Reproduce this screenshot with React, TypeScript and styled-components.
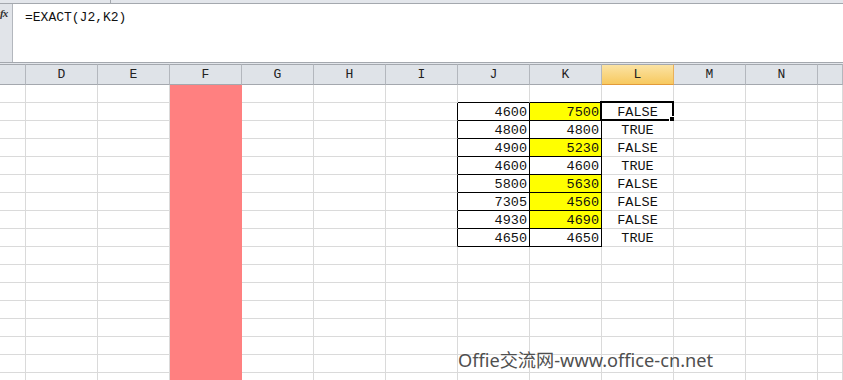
import React from 'react';
import styled, { createGlobalStyle, css } from 'styled-components';

const GlobalStyle = createGlobalStyle`
	html, body {
		margin: 0;
		padding: 0;
		background: #ffffff;
	}
`;

const CELL_FONT = `"Liberation Mono", "DejaVu Sans Mono", monospace`;

const Window = styled.div`
	position: relative;
	width: 843px;
	height: 380px;
	overflow: hidden;
	background: #ffffff;
`;

const TopStrip = styled.div`
	box-sizing: border-box;
	height: 4px;
	background: #e3e6eb;
	border-bottom: 1px solid #a4a8ae;
	display: flex;
`;

const TopDivider = styled.div`
	width: 110px;
	border-right: 1px solid #a4a8ae;
`;

const FormulaBar = styled.div`
	box-sizing: border-box;
	display: flex;
	height: 59px;
	border-bottom: 1px solid #a4a8ae;
`;

const FxBox = styled.div`
	box-sizing: border-box;
	width: 13px;
	background: #e1e4e9;
	border-right: 1px solid #b3b7bd;
	font-family: "Liberation Serif", serif;
	font-style: italic;
	font-weight: bold;
	font-size: 11px;
	color: #333;
	padding: 3px 0 0 0;
	letter-spacing: -1px;
`;

const FormulaText = styled.div`
	flex: 1;
	padding: 6px 0 0 12px;
	font-family: ${CELL_FONT};
	font-size: 13px;
	color: #111;
`;

const Gap = styled.div`
	height: 1px;
	background: #e3e6eb;
`;

const Sheet = styled.div`
	display: grid;
	grid-template-columns: 26px repeat(11, 72px) 1fr;
`;

const Header = styled.div<{ $active?: boolean }>`
	box-sizing: border-box;
	height: 21px;
	border-top: 1px solid #a4a8ae;
	border-bottom: 1px solid #a4a8ae;
	border-right: 1px solid #b3b7bd;
	background: #dfe3e8;
	font-family: ${CELL_FONT};
	font-size: 13px;
	color: #222;
	text-align: center;
	line-height: 20px;
	${p =>
		p.$active &&
		css`
			background: linear-gradient(#fbe3a4, #f7c95f);
			border-bottom-color: #e29a3a;
			border-right-color: #e9b05a;
		`}
`;

const Cell = styled.div<{
	$fill?: string;
	$right?: string;
	$bottom?: string;
	$align?: 'left' | 'right' | 'center';
}>`
	position: relative;
	box-sizing: border-box;
	height: 18px;
	border-right: 1px solid ${p => p.$right || '#dadada'};
	border-bottom: 1px solid ${p => p.$bottom || '#dadada'};
	background: ${p => p.$fill || '#ffffff'};
	font-family: ${CELL_FONT};
	font-size: 13.5px;
	color: #111;
	line-height: 20px;
	text-align: ${p => p.$align || 'left'};
	padding: 0 2px;
	white-space: nowrap;
	overflow: visible;
`;

const Selection = styled.div`
	position: absolute;
	left: -2px;
	top: -2px;
	right: -1px;
	bottom: -1px;
	border: 2px solid #000;
	pointer-events: none;
`;

const FillHandle = styled.div`
	position: absolute;
	right: -4px;
	bottom: -4px;
	width: 5px;
	height: 5px;
	background: #000;
	border: 1px solid #fff;
`;

const Watermark = styled.div`
	position: absolute;
	left: 458px;
	top: 346px;
	font-family: "Noto Sans", "Noto Sans CJK SC", sans-serif;
	font-size: 18.2px;
	color: #4f4f4f;
`;

const columns = ['', 'D', 'E', 'F', 'G', 'H', 'I', 'J', 'K', 'L', 'M', 'N', ''];

const data: [number, number, boolean][] = [
	[4600, 7500, false],
	[4800, 4800, true],
	[4900, 5230, false],
	[4600, 4600, true],
	[5800, 5630, false],
	[7305, 4560, false],
	[4930, 4690, false],
	[4650, 4650, true],
];

const ROWS = 17;
const SALMON = '#ff8080';
const YELLOW = '#ffff00';

const App: React.FunctionComponent<{}> = () => {
	const rows = [];
	for (let r = 0; r < ROWS; r++) {
		const item = r >= 1 && r <= 8 ? data[r - 1] : null;
		const inTable = item !== null;
		const aboveTable = r === 0;
		rows.push(
			columns.map((col, c) => {
				const key = `${r}-${c}`;
				// F column is filled salmon
				if (col === 'F') {
					return <Cell key={key} $fill={SALMON} $right={SALMON} $bottom={SALMON} />;
				}
				if (col === 'I' && inTable) {
					return <Cell key={key} $right="#000" />;
				}
				if ((col === 'J' || col === 'K') && (inTable || aboveTable)) {
					const bottom = '#000';
					if (aboveTable) return <Cell key={key} $bottom={bottom} />;
					const value = col === 'J' ? item![0] : item![1];
					const fill = col === 'K' && item![0] !== item![1] ? YELLOW : undefined;
					return (
						<Cell key={key} $fill={fill} $right="#000" $bottom={bottom} $align="right">
							{value}
						</Cell>
					);
				}
				if (col === 'L' && inTable) {
					return (
						<Cell key={key} $align="center">
							{item![2] ? 'TRUE' : 'FALSE'}
							{r === 1 && (
								<Selection>
									<FillHandle />
								</Selection>
							)}
						</Cell>
					);
				}
				return <Cell key={key} />;
			})
		);
	}

	return (
		<Window>
			<GlobalStyle />
			<TopStrip>
				<TopDivider />
			</TopStrip>
			<FormulaBar>
				<FxBox>fx</FxBox>
				<FormulaText>=EXACT(J2,K2)</FormulaText>
			</FormulaBar>
			<Gap />
			<Sheet>
				{columns.map((col, i) => (
					<Header key={`h-${i}`} $active={col === 'L'}>
						{col}
					</Header>
				))}
				{rows}
			</Sheet>
			<Watermark>Offie交流网-www.office-cn.net</Watermark>
		</Window>
	);
};

export default App;
